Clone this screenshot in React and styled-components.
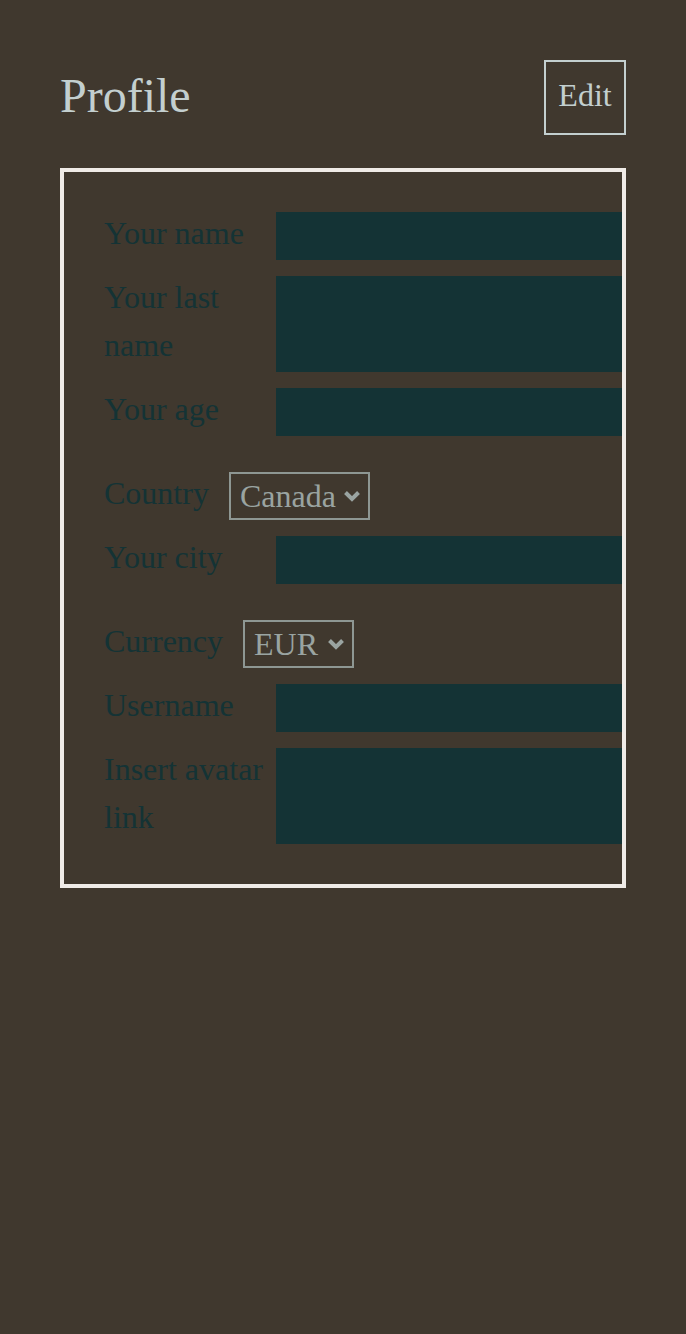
import React from 'react'
import styled, { createGlobalStyle } from 'styled-components'

const GlobalStyle = createGlobalStyle`
  html, body {
    margin: 0;
    padding: 0;
    background: #40382e;
  }
  body {
    font-family: 'Liberation Serif', 'Times New Roman', serif;
  }
`

const fields = [
  { type: 'input', label: 'Your name', lines: 1 },
  { type: 'input', label: 'Your last name', lines: 2 },
  { type: 'input', label: 'Your age', lines: 1 },
  { type: 'select', label: 'Country', options: ['Canada', 'USA', 'Mexico'] },
  { type: 'input', label: 'Your city', lines: 1 },
  { type: 'select', label: 'Currency', options: ['EUR', 'USD', 'CAD'] },
  { type: 'input', label: 'Username', lines: 1 },
  { type: 'input', label: 'Insert avatar link', lines: 2 }
]

const Chevron = () => (
  <ChevronIcon width='18' height='12' viewBox='0 0 18 12'>
    <path d='M2.5 2.5 L9 9 L15.5 2.5' fill='none' stroke='currentColor' strokeWidth='4' />
  </ChevronIcon>
)

const App = () => {
  return (
    <Page>
      <GlobalStyle />
      <Header>
        <Title>Profile</Title>
        <EditBtn>Edit</EditBtn>
      </Header>
      <Form>
        {fields.map(f =>
          f.type === 'select' ? (
            <SelectRow key={f.label}>
              <Label>{f.label}</Label>
              <SelectWrap>
                <Select defaultValue={f.options[0]}>
                  {f.options.map(o => (
                    <option key={o}>{o}</option>
                  ))}
                </Select>
                <Chevron />
              </SelectWrap>
            </SelectRow>
          ) : (
            <Row key={f.label}>
              <Label wide>{f.label}</Label>
              <Field lines={f.lines} />
            </Row>
          )
        )}
      </Form>
    </Page>
  )
}

export default App

const Page = styled.div`
  padding: 60px;
  min-height: 100vh;
  box-sizing: border-box;
  background: #40382e;
`
const Header = styled.div`
  display: flex;
  align-items: center;
  justify-content: space-between;
  margin-bottom: 33px;
`
const Title = styled.h1`
  margin: -4px 0 0;
  font-size: 48px;
  font-weight: normal;
  color: #c3cfcf;
`
const EditBtn = styled.button`
  box-sizing: border-box;
  width: 82px;
  height: 75px;
  padding: 0 0 4px;
  border: 2px solid #c3cfcf;
  background: transparent;
  color: #c3cfcf;
  font-family: inherit;
  font-size: 32px;
  cursor: pointer;
`
const Form = styled.form`
  border: 4px solid #efebe7;
  padding: 40px 0 40px 40px;
  display: flex;
  flex-direction: column;
  gap: 16px;
`
const Row = styled.div`
  display: flex;
  align-items: flex-start;
`
const SelectRow = styled.div`
  display: flex;
  align-items: flex-start;
  gap: 20px;
  margin-top: 20px;
`
const Label = styled.label`
  flex: ${p => (p.wide ? '0 0 172px' : '0 0 auto')};
  margin-top: -3px;
  font-size: 32px;
  line-height: 48px;
  color: #143335;
`
const Field = styled.div`
  flex: 1;
  height: ${p => p.lines * 48}px;
  background: #143335;
`
const SelectWrap = styled.div`
  position: relative;
  display: flex;
  color: #9aa4a1;
`
const Select = styled.select`
  appearance: none;
  box-sizing: border-box;
  height: 48px;
  padding: 0 30px 0 9px;
  border: 2px solid #8e9793;
  border-radius: 0;
  background: transparent;
  color: #9aa4a1;
  font-family: inherit;
  font-size: 32px;
  outline: none;
`
const ChevronIcon = styled.svg`
  position: absolute;
  right: 9px;
  top: 18px;
  pointer-events: none;
`
